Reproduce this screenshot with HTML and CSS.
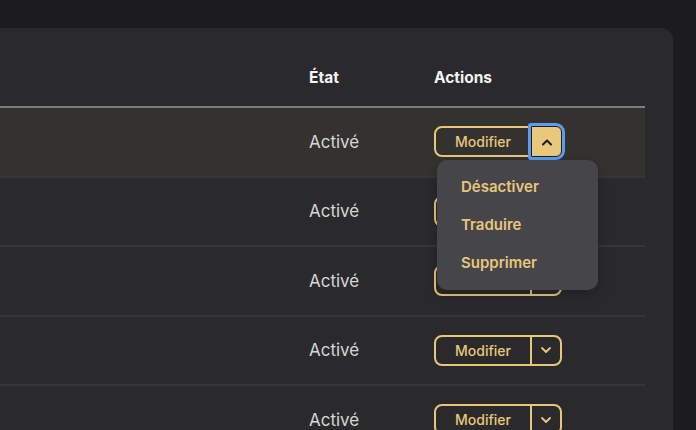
FILE: index.html
```html
<!DOCTYPE html>
<html lang="fr">
<head>
<meta charset="utf-8">
<link rel="stylesheet" href="styles.css">
</head>
<body>
<div class="card">
  <div class="table">
    <div class="row head">
      <div class="cell"></div>
      <div class="cell th">État</div>
      <div class="cell th">Actions</div>
    </div>
    <div class="row active">
      <div class="cell"></div>
      <div class="cell td">Activé</div>
      <div class="cell">
        <div class="split">
          <button class="main">Modifier</button>
          <button class="toggle focus"><svg width="12" height="8" viewBox="0 0 12 8"><path d="M2 6.5 L6 2.5 L10 6.5" fill="none" stroke="#1c1c1c" stroke-width="2" stroke-linecap="round" stroke-linejoin="round"/></svg></button>
          <div class="menu">
            <div class="item">Désactiver</div>
            <div class="item">Traduire</div>
            <div class="item">Supprimer</div>
          </div>
        </div>
      </div>
    </div>
    <div class="row">
      <div class="cell"></div>
      <div class="cell td">Activé</div>
      <div class="cell"><div class="split"><button class="main">Modifier</button><button class="toggle"><svg width="12" height="8" viewBox="0 0 12 8"><path d="M2 2 L6 6 L10 2" fill="none" stroke="#e8c77b" stroke-width="1.8" stroke-linecap="round" stroke-linejoin="round"/></svg></button></div></div>
    </div>
    <div class="row">
      <div class="cell"></div>
      <div class="cell td">Activé</div>
      <div class="cell"><div class="split"><button class="main">Modifier</button><button class="toggle"><svg width="12" height="8" viewBox="0 0 12 8"><path d="M2 2 L6 6 L10 2" fill="none" stroke="#e8c77b" stroke-width="1.8" stroke-linecap="round" stroke-linejoin="round"/></svg></button></div></div>
    </div>
    <div class="row">
      <div class="cell"></div>
      <div class="cell td">Activé</div>
      <div class="cell"><div class="split"><button class="main">Modifier</button><button class="toggle"><svg width="12" height="8" viewBox="0 0 12 8"><path d="M2 2 L6 6 L10 2" fill="none" stroke="#e8c77b" stroke-width="1.8" stroke-linecap="round" stroke-linejoin="round"/></svg></button></div></div>
    </div>
    <div class="row">
      <div class="cell"></div>
      <div class="cell td">Activé</div>
      <div class="cell"><div class="split"><button class="main">Modifier</button><button class="toggle"><svg width="12" height="8" viewBox="0 0 12 8"><path d="M2 2 L6 6 L10 2" fill="none" stroke="#e8c77b" stroke-width="1.8" stroke-linecap="round" stroke-linejoin="round"/></svg></button></div></div>
    </div>
  </div>
</div>
</body>
</html>
```

FILE: styles.css
```css
html, body {
  margin: 0;
  padding: 0;
  background: #1c1c1e;
  height: 100%;
  overflow: hidden;
  font-family: Inter, "Noto Sans", sans-serif;
}
.card {
  margin: 28px 0 0 -28px;
  width: 701px;
  box-sizing: border-box;
  padding: 26px 28px 0 28px;
  background: #2a2a2c;
  border-radius: 12px 12px 0 0;
  height: 402px;
  overflow: hidden;
}
.table {
  display: flex;
  flex-direction: column;
}
.row {
  display: grid;
  grid-template-columns: 309px 125px 1fr;
  height: 67.5px;
  flex-shrink: 0;
  border-bottom: 2px solid #363638;
  align-items: center;
}
.row.head {
  height: 52px;
  border-bottom: 2px solid #7d7d7f;
  align-items: start;
}
.row.active {
  background: #33322f;
}
.th {
  padding-top: 14px;
  line-height: 20px;
  font-size: 15.5px;
  font-weight: 700;
  color: #f4f4f4;
}
.td {
  font-size: 17px;
  color: #d6d6d6;
}
.split {
  position: relative;
  display: flex;
  width: 128px;
  height: 31px;
}
.split button {
  font-family: inherit;
  margin: 0;
  height: 31px;
  box-sizing: border-box;
  background: transparent;
  border: 2px solid #e8c77b;
  color: #e8c77b;
  display: flex;
  align-items: center;
  justify-content: center;
  padding: 0;
}
.main {
  width: 97px;
  border-radius: 8px 0 0 8px;
  font-size: 14px;
  font-weight: 500;
}
.split .main {
  border-right-width: 1.5px;
}
.split .toggle {
  width: 31px;
  border-left-width: 1.5px;
  border-radius: 0 8px 8px 0;
}
.split .toggle.focus {
  background: #e8c97c;
  border: 1px solid #1e1e1e;
  box-shadow: 0 0 0 3px #5b9df2;
  border-radius: 1px 6px 6px 1px;
  position: relative;
  z-index: 2;
}
.menu {
  position: absolute;
  left: 3px;
  top: 34px;
  width: 161px;
  box-sizing: border-box;
  padding: 8px 0;
  background: #464549;
  border-radius: 10px;
  z-index: 5;
  box-shadow: 0 4px 12px rgba(0,0,0,0.25);
}
.item {
  height: 38px;
  line-height: 38px;
  padding-left: 24px;
  font-size: 15px;
  font-weight: 600;
  color: #e8c77b;
}
```
